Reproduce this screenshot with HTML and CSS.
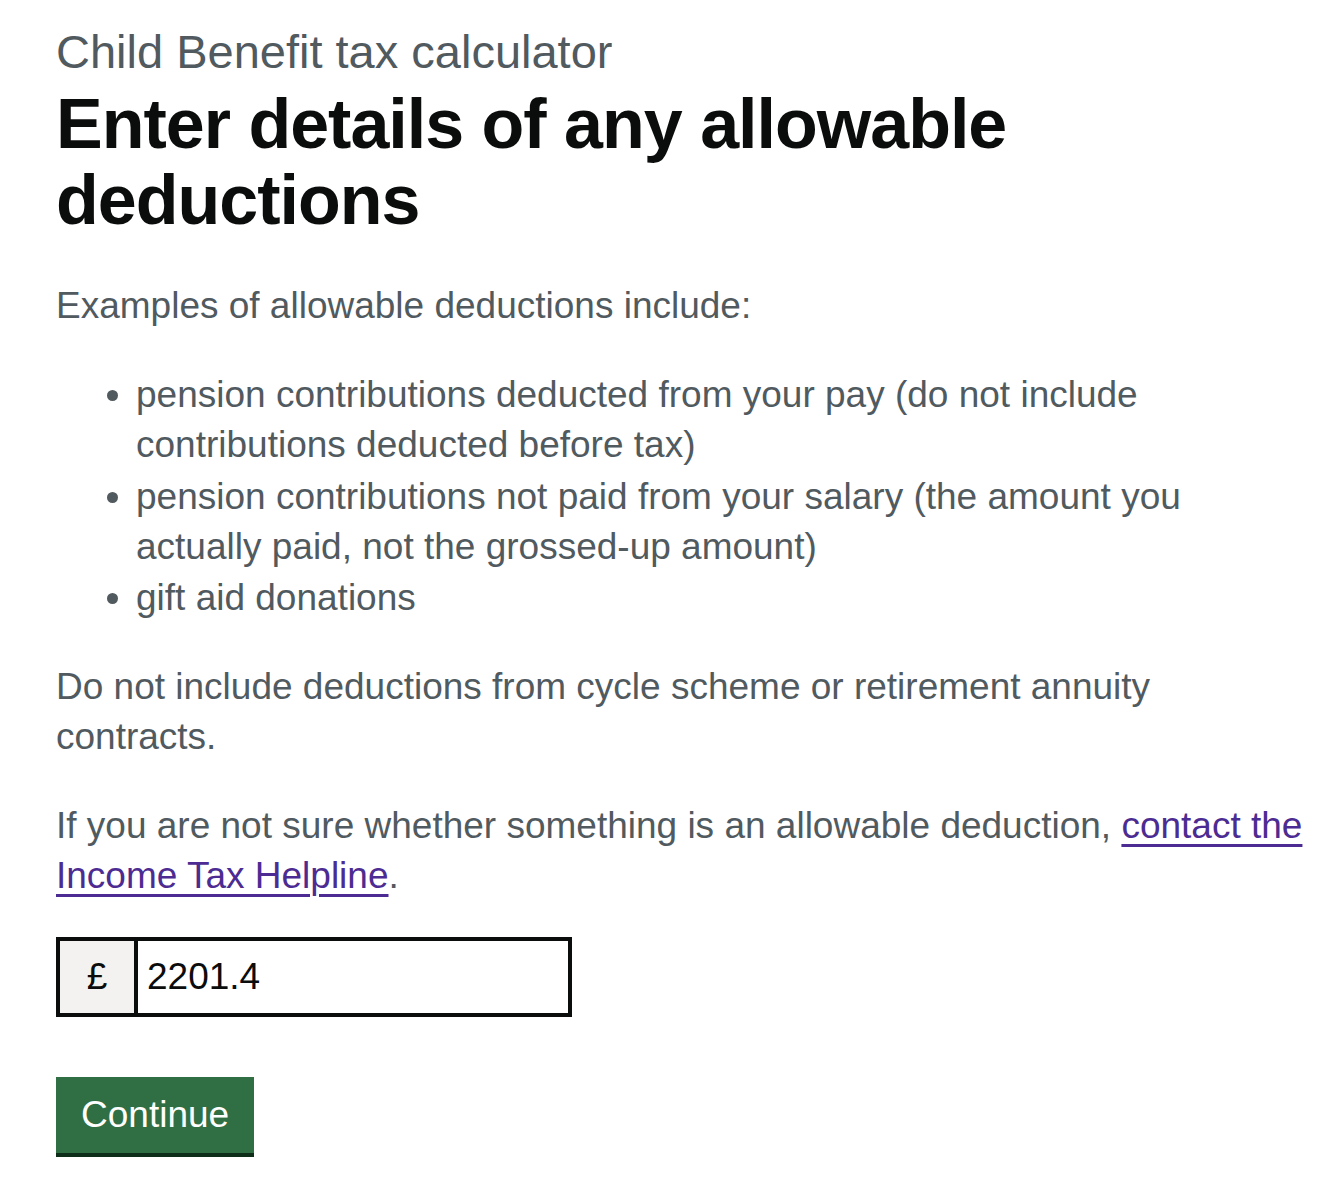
FILE: index.html
```html
<!DOCTYPE html>
<html lang="en">
<head>
<meta charset="utf-8">
<title>Enter details of any allowable deductions</title>
<link rel="stylesheet" href="styles.css">
</head>
<body>
<main class="page">
  <span class="caption">Child Benefit tax calculator</span>
  <h1 class="heading">Enter details of any allowable deductions</h1>
  <p class="body">Examples of allowable deductions include:</p>
  <ul class="list">
    <li>pension contributions deducted from your pay (do not include contributions deducted before tax)</li>
    <li>pension contributions not paid from your salary (the amount you actually paid, not the grossed-up amount)</li>
    <li>gift aid donations</li>
  </ul>
  <p class="body">Do not include deductions from cycle scheme or retirement annuity contracts.</p>
  <p class="body body-before-field">If you are not sure whether something is an allowable deduction, <a class="link" href="#">contact the Income Tax Helpline</a>.</p>
  <div class="input-wrapper">
    <div class="prefix">£</div>
    <input class="input" type="text" value="2201.4">
  </div>
  <button class="button" type="button">Continue</button>
</main>
</body>
</html>
```
FILE: styles.css
```css
html, body {
  margin: 0;
  padding: 0;
  background: #ffffff;
}

body {
  font-family: "Liberation Sans", Arial, sans-serif;
  color: #0b0c0c;
}

.page {
  padding: 22px 0 40px 56px;
  width: 1254px;
}

.caption {
  display: block;
  font-size: 47px;
  line-height: 60px;
  color: #505a5f;
  margin-bottom: 4px;
}

.heading {
  font-size: 70px;
  line-height: 76px;
  font-weight: 700;
  letter-spacing: -1px;
  margin: 0 0 43px;
  color: #0b0c0c;
}

.body {
  font-size: 37px;
  line-height: 50px;
  color: #505a5f;
  margin: 0 0 39px;
}

.body-before-field {
  margin-bottom: 36px;
}

.list {
  font-size: 37px;
  line-height: 50px;
  color: #505a5f;
  margin: 0 0 39px;
  padding-left: 80px;
  list-style: disc;
}

.list li {
  margin-bottom: 1.5px;
}

.link {
  color: #4c2c92;
  text-decoration: underline;
  text-decoration-thickness: 3px;
  text-underline-offset: 6px;
}

.input-wrapper {
  display: flex;
  width: 516px;
  height: 80px;
  margin: 0;
}

.prefix {
  flex: none;
  box-sizing: border-box;
  width: 78px;
  height: 80px;
  border: 4px solid #0b0c0c;
  border-right: 0;
  background: #f3f2f1;
  display: flex;
  align-items: center;
  justify-content: center;
  font-size: 37px;
  color: #0b0c0c;
}

.input {
  flex: 1 1 auto;
  min-width: 0;
  width: 0;
  box-sizing: border-box;
  height: 80px;
  margin: 0;
  border: 4px solid #0b0c0c;
  border-radius: 0;
  padding: 0 9px;
  font-family: "Liberation Sans", Arial, sans-serif;
  font-size: 37px;
  color: #0b0c0c;
  background: #ffffff;
  outline: none;
}

.button {
  display: block;
  margin-top: 60px;
  padding: 13px 25px;
  border: 0;
  border-radius: 0;
  background: #2f6f43;
  box-shadow: 0 4px 0 #0f2e1a;
  color: #ffffff;
  font-family: "Liberation Sans", Arial, sans-serif;
  font-size: 37px;
  line-height: 50px;
  cursor: pointer;
}
```
